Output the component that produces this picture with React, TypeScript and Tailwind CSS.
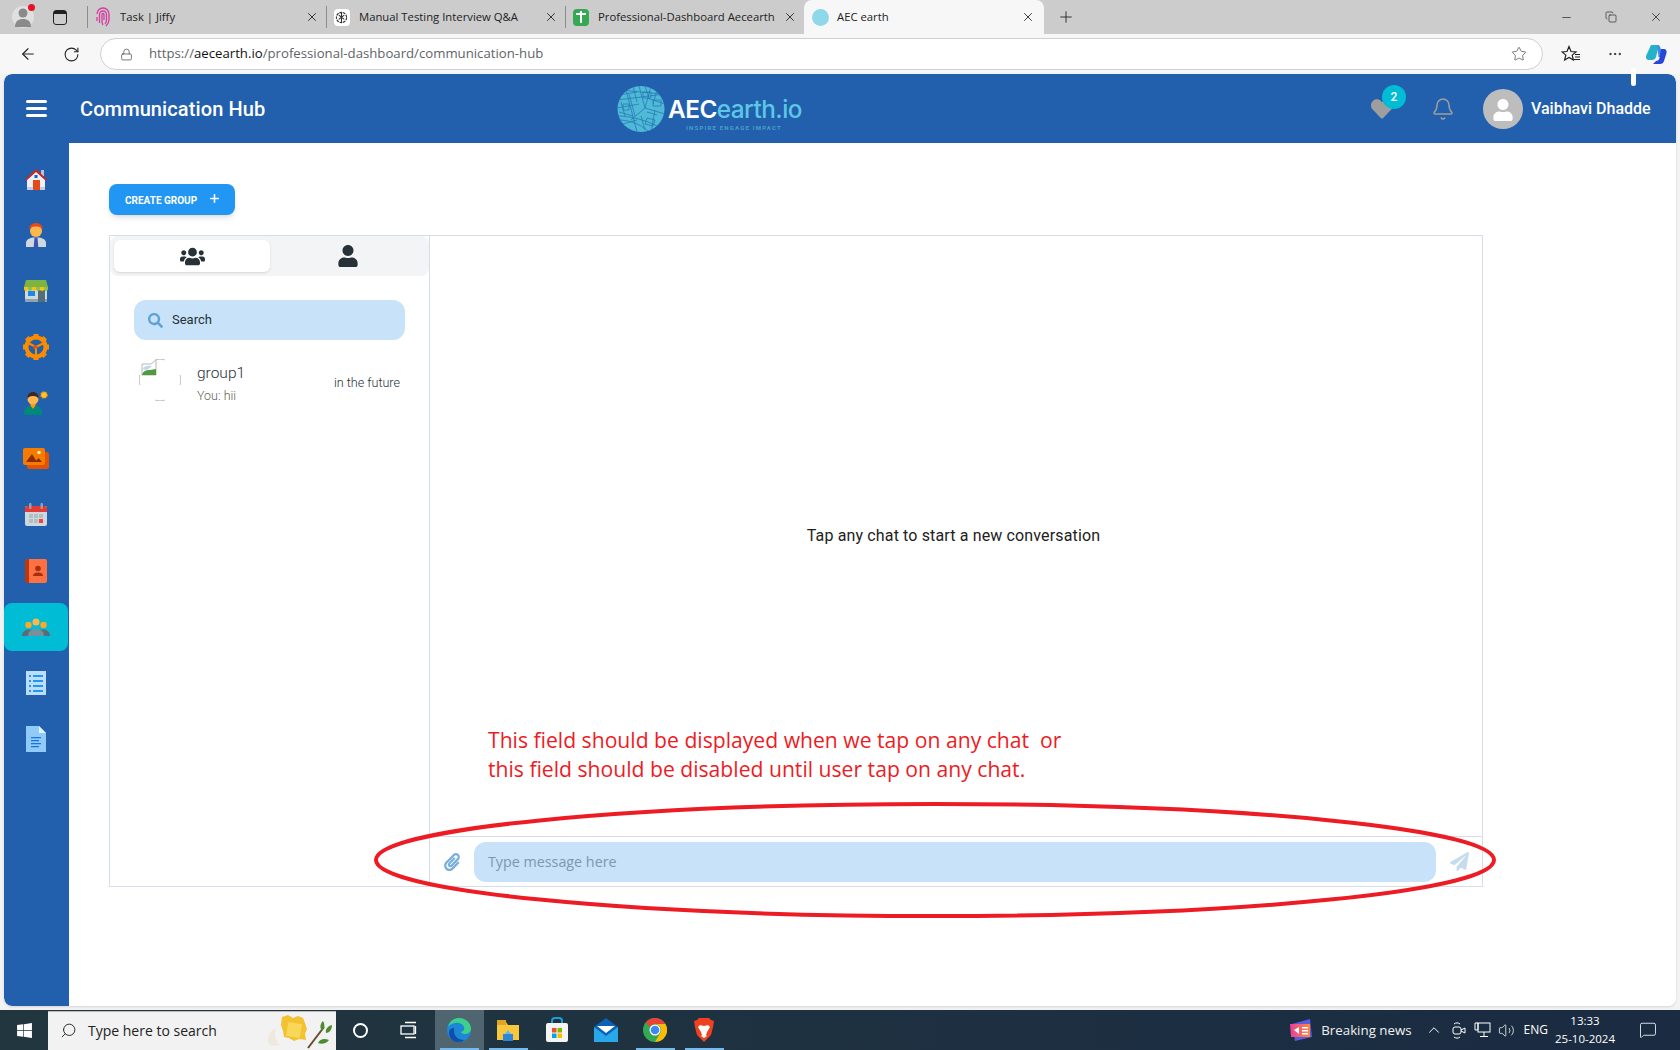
import React from 'react';
import { ArrowLeft, Bell, Copy, Minus, MoreHorizontal, Plus, RotateCw, Lock, Star, X, Search, ChevronUp, MessageSquare, Volume2 } from 'lucide-react';
import { FaHeart, FaPaperPlane, FaPaperclip, FaSearch, FaUser, FaUsers, FaWindows } from 'react-icons/fa';

const roboto = "[font-family:Roboto,sans-serif]";

/* ---------- sidebar icons ---------- */
const HomeIcon = () => (
  <svg width="24" height="24" viewBox="0 0 24 24">
    <rect x="17" y="3" width="3" height="6" fill="#b9c4dc" />
    <path d="M3 12 12 4l9 8v11H3z" fill="#eef0f7" />
    <path d="M1 12.500 12 2l11 10.500-1.300 1.300L12 5 2.300 13.800z" fill="#c62828" />
    <rect x="3" y="20" width="18" height="3" fill="#c5cae9" />
    <rect x="9" y="13" width="7" height="10" fill="#e64a19" />
    <rect x="10.500" y="8" width="3" height="3" fill="#1565c0" />
  </svg>
);
const AgentIcon = () => (
  <svg width="24" height="26" viewBox="0 0 24 26">
    <path d="M2 25v-4c0-3 3-5 7-5.500h6c4 .5 7 2.500 7 5.500v4z" fill="#cfd8dc" />
    <path d="M10.500 15.500h3l.8 9.500h-4.600z" fill="#3f51b5" />
    <circle cx="12" cy="9" r="6" fill="#ffb74d" />
    <path d="M5.500 8C5 3 8.500 1 12 1s7 2 6.500 7c-1-2-2-3.500-6.500-3.500S6.500 6 5.500 8z" fill="#e64a19" />
  </svg>
);
const ShopIcon = () => (
  <svg width="26" height="24" viewBox="0 0 26 24">
    <rect x="2" y="8" width="22" height="15" fill="#cfd8dc" />
    <rect x="2" y="20" width="22" height="3" fill="#90a4ae" />
    <rect x="5" y="12" width="7" height="5" fill="#1e88e5" />
    <rect x="15" y="11" width="7" height="12" fill="#546e7a" />
    <path d="M3 1h20l2 7H1z" fill="#7cb342" />
    <path d="M1 8h4v2a2 2 0 0 1-4 0zM9 8h4v2a2 2 0 0 1-4 0zM17 8h4v2a2 2 0 0 1-4 0z" fill="#ffc107" />
    <path d="M5 8h4v2a2 2 0 0 1-4 0zM13 8h4v2a2 2 0 0 1-4 0zM21 8h4v2a2 2 0 0 1-4 0z" fill="#8bc34a" />
  </svg>
);
const GearPlayIcon = () => (
  <svg width="26" height="26" viewBox="0 0 26 26">
    <circle cx="13" cy="13" r="9.500" fill="none" stroke="#fb8c00" strokeWidth="4" />
    <g fill="#fb8c00">
      <rect x="10.500" y="0" width="5" height="5" />
      <rect x="10.500" y="21" width="5" height="5" />
      <rect x="0" y="10.500" width="5" height="5" />
      <rect x="21" y="10.500" width="5" height="5" />
      <rect x="3" y="3" width="5" height="5" transform="rotate(45 5.500 5.500)" />
      <rect x="18" y="3" width="5" height="5" transform="rotate(45 20.500 5.500)" />
      <rect x="3" y="18" width="5" height="5" transform="rotate(45 5.500 20.500)" />
      <rect x="18" y="18" width="5" height="5" transform="rotate(45 20.500 20.500)" />
    </g>
    <path d="M13 13 5 9M13 13l8-4M13 13v8" stroke="#fb8c00" strokeWidth="2" />
    <path d="M10.500 10.500v5l5-2.500z" fill="#e65100" />
  </svg>
);
const ExpertIcon = () => (
  <svg width="26" height="26" viewBox="0 0 26 26">
    <path d="M1 25v-3c0-3.500 3-5.500 6-6l3-.5 3 .5c3 .5 6 2.500 6 6v3z" fill="#00897b" />
    <path d="M7.500 15.500 10 19l2.500-3.500v-2h-5z" fill="#ff9800" />
    <circle cx="10" cy="9" r="5.500" fill="#ffb74d" />
    <path d="M4.500 9C4 4 7 2 10 2s6 2 5.500 7c-1-2-2-3-5.500-3S5.500 7 4.500 9z" fill="#3e2723" />
    <circle cx="21" cy="5" r="3" fill="#ffca28" stroke="#ff9800" strokeWidth="1.500" strokeDasharray="1.500 1" />
  </svg>
);
const GalleryIcon = () => (
  <svg width="26" height="22" viewBox="0 0 26 22">
    <rect x="4" y="4" width="22" height="17" rx="2" fill="#e65100" />
    <rect x="0" y="0" width="22" height="17" rx="2" fill="#f57c00" />
    <path d="M3 14 9 6l5 8zM12 14l3.500-4 3.500 4z" fill="#8d2c00" />
    <circle cx="16" cy="4.500" r="1.800" fill="#ffe9a8" />
  </svg>
);
const CalendarIcon = () => (
  <svg width="24" height="24" viewBox="0 0 24 24">
    <rect x="1" y="3" width="22" height="20" rx="2" fill="#cfd8dc" />
    <path d="M1 9V5a2 2 0 0 1 2-2h18a2 2 0 0 1 2 2v4z" fill="#e53935" />
    <rect x="5" y="0" width="2.500" height="6" rx="1" fill="#90a4ae" />
    <rect x="16.500" y="0" width="2.500" height="6" rx="1" fill="#90a4ae" />
    <g fill="#b0bec5">
      <rect x="5" y="11" width="4" height="4" />
      <rect x="10" y="11" width="4" height="4" />
      <rect x="15" y="11" width="4" height="4" />
      <rect x="5" y="16" width="4" height="4" />
      <rect x="10" y="16" width="4" height="4" />
    </g>
    <rect x="15" y="16" width="4" height="4" fill="#f44336" />
  </svg>
);
const ContactsIcon = () => (
  <svg width="22" height="24" viewBox="0 0 22 24">
    <path d="M3 0h17a2 2 0 0 1 2 2v20a2 2 0 0 1-2 2H3a2 2 0 0 1-2-2V2a2 2 0 0 1 2-2z" fill="#ff7043" />
    <path d="M3 0h1v24H3a3 3 0 0 1-3-3V3a3 3 0 0 1 3-3z" fill="#bf360c" />
    <circle cx="13" cy="9.500" r="2.800" fill="#a5300a" />
    <path d="M8 17c0-2.500 2.500-3.500 5-3.500s5 1 5 3.500z" fill="#a5300a" />
  </svg>
);
const GroupIcon = () => (
  <svg width="28" height="18" viewBox="0 0 28 18">
    <path d="M0 18c0-4 3-6.500 7-6.500s7 2.500 7 6.500z" fill="#546e7a" />
    <path d="M14 18c0-4 3-6.500 7-6.500s7 2.500 7 6.500z" fill="#546e7a" />
    <path d="M6 18c0-4.500 3.500-7 8-7s8 2.500 8 7z" fill="#78909c" />
    <circle cx="6.500" cy="7" r="3.200" fill="#ffa726" />
    <circle cx="21.500" cy="7" r="3.200" fill="#ffa726" />
    <circle cx="14" cy="4" r="3.500" fill="#ffb74d" />
  </svg>
);
const ListIcon = () => (
  <svg width="20" height="24" viewBox="0 0 20 24">
    <rect width="20" height="24" fill="#bbdefb" />
    <g fill="#2196f3">
      <rect x="3" y="4" width="2" height="2" />
      <rect x="7" y="4" width="10" height="2" />
      <rect x="3" y="9" width="2" height="2" />
      <rect x="7" y="9" width="10" height="2" />
      <rect x="3" y="14" width="2" height="2" />
      <rect x="7" y="14" width="10" height="2" />
      <rect x="3" y="19" width="2" height="2" />
      <rect x="7" y="19" width="10" height="2" />
    </g>
  </svg>
);
const DocIcon = () => (
  <svg width="20" height="26" viewBox="0 0 20 26">
    <path d="M0 0h13l7 7v19H0z" fill="#90caf9" />
    <path d="M13 0l7 7h-7z" fill="#e3f2fd" />
    <path d="M5 11h10v1.200H5zM5 14h8v1.200H5zM5 17h10v1.200H5zM5 20h8v1.200H5z" fill="#1976d2" />
  </svg>
);

const sidebarItems = [
  { icon: <HomeIcon /> },
  { icon: <AgentIcon /> },
  { icon: <ShopIcon /> },
  { icon: <GearPlayIcon /> },
  { icon: <ExpertIcon /> },
  { icon: <GalleryIcon /> },
  { icon: <CalendarIcon /> },
  { icon: <ContactsIcon /> },
  { icon: <GroupIcon />, active: true },
  { icon: <ListIcon /> },
  { icon: <DocIcon /> },
];

/* ---------- browser chrome ---------- */
const tabs = [
  {
    title: 'Task | Jiffy',
    icon: (
      <svg width="16" height="20" viewBox="0 0 16 20" fill="none" stroke="#d63b9e" strokeWidth="1.300">
        <path d="M2 7a6 6 0 0 1 12 0v6c0 3-2 5-3 6" />
        <path d="M4.500 16V7.500a3.500 3.500 0 0 1 7 0V13c0 1.500-.5 3-1.500 4" />
        <path d="M8 18c-.5-1-1-2-1-3.500v-7a1 1 0 0 1 2 0V13" />
        <path d="M2 10v4" />
      </svg>
    ),
  },
  {
    title: 'Manual Testing Interview Q&A',
    icon: (
      <span className="flex h-[17px] w-[16px] items-center justify-center rounded-sm bg-white">
        <svg width="13" height="13" viewBox="0 0 14 14" fill="none" stroke="#333" strokeWidth="1.200">
          <circle cx="7" cy="7" r="5.500" strokeDasharray="3 .8" />
          <path d="M4 4.500 10 9M10 4.500 4 9M7 2v10" />
        </svg>
      </span>
    ),
  },
  {
    title: 'Professional-Dashboard Aecearth',
    icon: (
      <span className="flex h-[17px] w-[16px] items-center justify-center rounded-sm bg-[#34a853]">
        <svg width="12" height="14" viewBox="0 0 12 14" fill="#fff">
          <rect x="1" y="3" width="10" height="2" />
          <rect x="5" y="1" width="2" height="12" />
        </svg>
      </span>
    ),
  },
];

const TabStrip = () => (
  <div className="flex h-[34px] shrink-0 items-center bg-[#cccccc] [font-family:'Open_Sans',sans-serif]">
    <div className="flex w-[87px] shrink-0 items-center">
      <div className="relative ml-[12px] flex h-[22px] w-[22px] items-center justify-center rounded-full bg-[#e0e0e0]">
        <svg width="18" height="20" viewBox="0 0 18 20" fill="#8a8a8a">
          <circle cx="9" cy="6" r="4.500" />
          <path d="M1 20c0-6 3.500-8 8-8s8 2 8 8z" />
        </svg>
        <span className="absolute top-[-2px] right-[-1px] h-[7px] w-[7px] rounded-full bg-[#e81123]" />
      </div>
      <div className="ml-[19px] flex h-[15px] w-[14px] flex-col rounded-[3px] border-[1.500px] border-[#222]">
        <span className="h-[3px] bg-[#222]" />
      </div>
    </div>
    {tabs.map(tab => (
      <div key={tab.title} className="flex h-[22px] w-[239px] shrink-0 items-center border-l border-[#8c8c8c] pr-[7px] pl-[6px]">
        <span className="flex w-[17px] shrink-0 justify-center">{tab.icon}</span>
        <span className="ml-[9px] flex-1 overflow-hidden text-[11.300px] whitespace-nowrap text-[#222]">{tab.title}</span>
        <X size={14} strokeWidth={1.500} className="shrink-0 text-[#222]" />
      </div>
    ))}
    <div className="flex h-[34px] w-[240px] shrink-0 items-center rounded-t-lg bg-[#f7f7f7] pr-[9px] pl-[8px]">
      <span className="h-[17px] w-[17px] shrink-0 rounded-full bg-[#8fd8ea]" />
      <span className="ml-[8px] flex-1 text-[11.300px] text-[#222]">AEC earth</span>
      <X size={14} strokeWidth={1.500} className="shrink-0 text-[#222]" />
    </div>
    <Plus size={18} strokeWidth={1.200} className="ml-[13px] text-[#222]" />
    <div className="ml-auto flex items-center gap-[32px] pr-[17px]">
      <Minus size={13} strokeWidth={1.300} className="text-[#222]" />
      <Copy size={12} strokeWidth={1.300} className="text-[#222]" />
      <X size={14} strokeWidth={1.300} className="text-[#222]" />
    </div>
  </div>
);

const AddressBar = () => (
  <div className="flex h-[40px] shrink-0 items-center bg-[#f7f7f7] [font-family:'Open_Sans',sans-serif]">
    <ArrowLeft size={18} strokeWidth={1.500} className="ml-[19px] text-[#222]" />
    <RotateCw size={17} strokeWidth={1.500} className="ml-[26px] text-[#222]" />
    <div className="ml-[20px] flex h-[32px] w-[1443px] items-center rounded-full border border-[#d0d0d0] bg-white pr-[15px] pl-[19px]">
      <Lock size={13} strokeWidth={1.300} className="text-[#444]" />
      <span className="ml-[16px] text-[13.200px] text-[#5f6368]">
        https://<span className="text-[#111]">aecearth.io</span>/professional-dashboard/communication-hub
      </span>
      <Star size={16} strokeWidth={1.200} className="ml-auto text-[#555]" />
    </div>
    <svg width="20" height="18" viewBox="0 0 20 18" fill="none" stroke="#222" strokeWidth="1.200" className="ml-[18px]">
      <path d="M8 1.500 10 6.500l5 .4-3.800 3.200 1.200 5L8 12.500l-4.400 2.600 1.200-5L1 6.900l5-.4z" />
      <path d="M14 9.500h5M14 12h5M13 14.500h6" />
    </svg>
    <MoreHorizontal size={16} strokeWidth={1.500} className="ml-[26px] text-[#222]" />
    <svg width="24" height="24" viewBox="0 0 24 24" className="ml-[21px]">
      <path d="M7 3h8l-3 12c-.5 2-2 3-4 3H5c-2.500 0-3.500-2-3-4z" fill="#27b0c9" />
      <path d="M13 3c2 0 3 1 3.500 3l2 9h-4z" fill="#3a8ee6" />
      <path d="M17 7h3c2 0 3 2 2.500 4L20 19c-.5 2-2 3-4 3H9l3-3c2 0 3-1 3.500-3z" fill="#2747d8" />
    </svg>
  </div>
);

/* ---------- app header ---------- */
const EarthLogo = () => (
  <svg width="48" height="46" viewBox="0 0 48 46" className="shrink-0">
    <defs>
      <clipPath id="earth">
        <ellipse cx="24" cy="23" rx="23.500" ry="23" />
      </clipPath>
    </defs>
    <ellipse cx="24" cy="23" rx="23.500" ry="23" fill="#4fb9d8" />
    <g clipPath="url(#earth)" stroke="#2a78b4" strokeWidth="0.800" fill="none">
      <path d="M0 30c14 0 30 4 48 14M0 34c12 0 22 3 32 12M8 0l12 46M22 0l6 22 20 6M34 0 28 22 14 34M0 14l48-6M0 22l22-4M30 12l18 6M12 8l6 22M38 24l-4 22M2 26l14 4" />
      <path d="M4 4l40 4M2 9l18-3M16 0l4 16M28 0l4 12M40 4l-4 14M4 16l4 14M24 30l4 14M30 26l10 3M6 38l14-4M26 6h8v6h-8zM36 14h8v6h-8zM6 18h6v6H6zM30 32l8 2-2 6-8-2z" />
    </g>
  </svg>
);

const AppHeader = () => (
  <header className={`flex h-[69px] shrink-0 items-center rounded-t-lg bg-[#2260ae] ${roboto}`}>
    <div className="ml-[22px] flex w-[21px] flex-col gap-[4px]">
      <span className="h-[3px] rounded-full bg-white" />
      <span className="h-[3px] rounded-full bg-white" />
      <span className="h-[3px] rounded-full bg-white" />
    </div>
    <h1 className="ml-[33px] w-[343px] text-[20px] font-medium tracking-[0.1px] text-white">Communication Hub</h1>
    <div className="ml-[194px] flex w-[190px] items-center gap-[3px]">
      <EarthLogo />
      <div className="flex flex-col items-center pt-[10px]">
        <span className="text-[24.300px] leading-[28px] font-semibold tracking-[-0.5px] whitespace-nowrap text-white [font-family:Inter,sans-serif]">
          AEC<span className="font-medium text-[#5cc8e4]">earth.io</span>
        </span>
        <span className="-ml-[2px] text-[6px] leading-[9px] font-bold tracking-[1.200px] whitespace-nowrap text-[#4a9fc9]">INSPIRE ENGAGE IMPACT</span>
      </div>
    </div>
    <div className="relative ml-[563px] flex h-[24px] w-[24px] items-center justify-center">
      <FaHeart size={22} className="text-[#9e9e9e]" />
      <span className="absolute top-[-12px] left-[12px] flex h-[24px] w-[24px] items-center justify-center rounded-full bg-[#00bcd4] text-[12px] font-medium text-white">2</span>
    </div>
    <Bell size={24} strokeWidth={1.500} className="ml-[37px] text-[#9e9e9e]" />
    <div className="ml-[28px] flex h-[40px] w-[40px] items-end justify-center overflow-hidden rounded-full bg-[#bdbdbd]">
      <FaUser size={22} className="mb-[8px] text-white" />
    </div>
    <span className="ml-[8px] text-[16px] font-medium whitespace-nowrap text-white">Vaibhavi Dhadde</span>
  </header>
);

const Sidebar = () => (
  <aside className="flex w-[65px] shrink-0 flex-col rounded-bl-lg bg-[#2260ae] pt-[8px]">
    {sidebarItems.map((item, i) => (
      <div key={i} className="flex h-[56px] items-center">
        <div className={`flex h-[48px] w-[64px] items-center justify-center rounded-lg ${item.active ? 'bg-[#00bcd4]' : ''}`}>{item.icon}</div>
      </div>
    ))}
  </aside>
);

/* ---------- chat ---------- */
const BrokenAvatar = () => (
  <svg width="42" height="42" viewBox="0 0 42 42" fill="none" className="shrink-0">
    <path d="M16 .8a21 21 0 0 1 10 0M41.200 16a21 21 0 0 1 0 10M26 41.200a21 21 0 0 1-10 0M.8 26a21 21 0 0 1 0-10" stroke="#c4c4c4" />
    <path d="M3 5h9l5-4v15H3z" fill="#fff" stroke="#b8b8b8" />
    <path d="M3 16c1-4 4-5 8-5l6-1v6z" fill="#4d9a3f" />
    <path d="M3 10c2-3 6-4 10-3l-5 4z" fill="#c3d6e8" />
  </svg>
);

const ChatList = () => (
  <div className="flex w-[320px] shrink-0 flex-col border-r border-[#d5dee8]">
    <div className="flex h-[40px] rounded-lg bg-[#f3f4f6] px-[4px] pt-[4px] pb-[4px]">
      <div className="flex h-[32px] w-[156px] items-center justify-center rounded-md bg-white shadow-sm">
        <FaUsers size={25} className="text-[#263238]" />
      </div>
      <div className="flex flex-1 items-center justify-center">
        <FaUser size={22} className="text-[#263238]" />
      </div>
    </div>
    <div className="mx-[24px] mt-[24px] flex h-[40px] w-[271px] items-center rounded-xl bg-[#c7e2f9] px-[14px]">
      <FaSearch size={15} className="text-[#5fa3d6]" />
      <span className="ml-[9px] text-[13px] text-[#263238]">Search</span>
    </div>
    <div className="mt-[19px] flex pr-[29px] pl-[29px]">
      <BrokenAvatar />
      <div className="ml-[16px] flex-1 pt-[5px]">
        <div className="text-[15.500px] leading-[19px] font-light text-[#263238]">group1</div>
        <div className="mt-[6px] text-[12.500px] leading-[14px] font-light text-[#5f5f52]">You: hii</div>
      </div>
      <span className="mt-[17px] text-[12.600px] leading-[14px] font-light whitespace-nowrap text-[#263238]">in the future</span>
    </div>
  </div>
);

const ChatPanel = () => (
  <div className="flex flex-1 flex-col">
    <div className="flex flex-1 items-center justify-center pr-[5px]">
      <p className="text-[16px] tracking-[0.14px] text-[#212121]">Tap any chat to start a new conversation</p>
    </div>
    <div className="flex h-[50px] items-center border-t border-[#d5dee8]">
      <FaPaperclip size={18} className="ml-[13px] text-[#79aedd]" />
      <div className="ml-[13px] flex h-[40px] w-[962px] items-center rounded-xl bg-[#c7e2f9] px-[14px]">
        <span className="pt-[1px] [font-family:'Open_Sans',sans-serif] text-[14.300px] text-[#7d98ae]">Type message here</span>
      </div>
      <FaPaperPlane size={19} className="ml-[14px] text-[#c5dcef]" />
    </div>
  </div>
);

const Content = () => (
  <main className={`flex-1 bg-white pt-[41px] pl-[40px] ${roboto}`}>
    <button className="flex h-[31px] w-[126px] items-center rounded-lg bg-[#2196f3] pt-[1px] pl-[16px] text-[10px] font-bold text-white shadow-md">
      CREATE GROUP
      <Plus size={13} strokeWidth={3} className="mb-[4px] ml-[11px]" />
    </button>
    <div className="mt-[20px] flex h-[652px] w-[1374px] border border-[#d5dee8]">
      <ChatList />
      <ChatPanel />
    </div>
  </main>
);

/* ---------- windows taskbar ---------- */
const EdgeIcon = () => (
  <svg width="26" height="26" viewBox="0 0 26 26">
    <circle cx="13" cy="13" r="12" fill="#1b87d6" />
    <path d="M2 10C4 3 9 1 13 1c7 0 12 5 12 11 0 3-3 5-6 5-2 0-4-1-4-2 3-1 4-3 3-5-1-3-5-5-9-4S3 8 2 10z" fill="#3ed08b" />
    <path d="M8 14c0 5 4 9 10 9-2 2-4 2-6 2-6 0-9-5-9-9 0-3 2-5 5-5z" fill="#0f4fa8" />
  </svg>
);
const FolderIcon = () => (
  <svg width="24" height="22" viewBox="0 0 24 22">
    <path d="M1 3h9l2 3h11v15H1z" fill="#f9c73e" />
    <path d="M1 1h9v5H1z" fill="#e0a526" />
    <rect x="7" y="15" width="10" height="7" fill="#2d87d8" />
    <path d="M9 15l3-4 3 4z" fill="#64b5f6" />
  </svg>
);
const StoreIcon = () => (
  <svg width="24" height="26" viewBox="0 0 24 26">
    <path d="M7 7V4a3 3 0 0 1 3-3h4a3 3 0 0 1 3 3v3" fill="none" stroke="#19a0d8" strokeWidth="2" />
    <rect x="1" y="6" width="22" height="19" rx="2" fill="#f4f4f4" />
    <rect x="7" y="11" width="4.500" height="4.500" fill="#f25022" />
    <rect x="12.500" y="11" width="4.500" height="4.500" fill="#7fba00" />
    <rect x="7" y="16.500" width="4.500" height="4.500" fill="#00a4ef" />
    <rect x="12.500" y="16.500" width="4.500" height="4.500" fill="#ffb900" />
  </svg>
);
const MailIcon = () => (
  <svg width="24" height="24" viewBox="0 0 24 24">
    <path d="M0 9 12 0l12 9v15H0z" fill="#0a62b5" />
    <path d="M0 9l12 9 12-9v15H0z" fill="#28a8ea" />
    <path d="M3 8h18l-9 7z" fill="#fff" />
  </svg>
);
const ChromeIcon = () => (
  <svg width="24" height="24" viewBox="0 0 24 24">
    <circle cx="12" cy="12" r="12" fill="#34a853" />
    <path d="M12 0a12 12 0 0 1 10.400 6H12a6 6 0 0 0-5.200 3L2.800 4.300A12 12 0 0 1 12 0z" fill="#ea4335" />
    <path d="M22.400 6A12 12 0 0 1 12 24l5.200-9A6 6 0 0 0 12 6z" fill="#fbbc05" />
    <circle cx="12" cy="12" r="5.500" fill="#fff" />
    <circle cx="12" cy="12" r="4.300" fill="#4285f4" />
  </svg>
);
const BraveIcon = () => (
  <svg width="20" height="24" viewBox="0 0 20 24">
    <path d="M5 0h10l2 2 3 1-1 6-2 8-7 7-7-7-2-8-1-6 3-1z" fill="#f1421f" />
    <path d="M6 7l4 1 4-1 2 2-3 5-1 3 1 1-3 2-3-2 1-1-1-3-3-5z" fill="#fff" />
  </svg>
);

const taskbarApps = [
  { icon: <EdgeIcon />, active: true, running: true },
  { icon: <FolderIcon />, running: true },
  { icon: <StoreIcon /> },
  { icon: <MailIcon /> },
  { icon: <ChromeIcon />, running: true },
  { icon: <BraveIcon />, running: true },
];

const Taskbar = () => (
  <footer className="flex h-[40px] shrink-0 items-center bg-gradient-to-r from-[#22363f] to-[#1a2b42] [font-family:'Open_Sans',sans-serif] text-white">
    <div className="flex w-[48px] justify-center">
      <FaWindows size={17} />
    </div>
    <div className="mt-[1px] flex h-[39px] w-[288px] items-center border-t border-[#bbb] bg-[#f2f2f2] pb-[1px] pl-[12px] text-[#222]">
      <Search size={17} strokeWidth={1.300} className="-scale-x-100" />
      <span className="ml-[11px] text-[14px]">Type here to search</span>
      <svg width="70" height="36" viewBox="0 0 70 36" className="ml-auto">
        <path d="M2 28c0-8 3-10 8-13-2 5-1 13 4 17-6 2-12 0-12-4z" fill="#efe8dc" />
        <g transform="translate(-8 0)">
          <path d="M24 4l6-2 5 3 5-2 5 2 2 5 2 6-2 5 1 6-7-1-5 2-5-3-5-1-1-6-2-6z" fill="#f2c230" />
          <rect x="29" y="10" width="14" height="14" fill="#f9d75a" transform="rotate(10 36 17)" />
        </g>
        <path d="M42 35 58 14" stroke="#6b4a2b" strokeWidth="2" />
        <path d="M56 18c-3-4-1-8 1-10 2 3 2 7-1 10zM52 30c4 2 9 0 11-3-5-2-9-1-11 3zM60 20c3 0 6-3 6-8-4 1-7 4-6 8z" fill="#4c8b2f" />
      </svg>
    </div>
    <div className="flex w-[48px] justify-center">
      <span className="h-[15px] w-[15px] rounded-full border-[2.500px] border-white" />
    </div>
    <div className="flex w-[48px] items-center justify-center">
      <svg width="18" height="18" viewBox="0 0 18 18" fill="none" stroke="#fff" strokeWidth="1.300">
        <rect x="2" y="5" width="13" height="8" />
        <path d="M6 1.500h11M6 16.500h11M16.500 5v8" />
      </svg>
    </div>
    <div className="ml-[3px] flex">
      {taskbarApps.map((app, i) => (
        <div key={i} className={`relative flex h-[40px] w-[49px] items-center justify-center pr-[2px] ${app.active ? 'bg-[#4f6570]' : ''}`}>
          {app.icon}
          {app.running && <span className="absolute right-[5px] bottom-0 left-[5px] h-[2px] bg-[#76b9ed]" />}
        </div>
      ))}
    </div>
    <div className="ml-auto flex items-center pr-[23px]">
      <svg width="24" height="24" viewBox="0 0 24 24">
        <path d="M3 6 21 1l2 18-17 4z" fill="#5b5be0" />
        <path d="M1 6h20v13H2z" fill="url(#news)" />
        <defs>
          <linearGradient id="news" x1="0" x2="1">
            <stop offset="0" stopColor="#e83f9b" />
            <stop offset="1" stopColor="#ff8a3c" />
          </linearGradient>
        </defs>
        <path d="M5 12l5-3v7zM13 9h6v1.500h-6zM13 12h6v1.500h-6zM13 15h6v1.500h-6z" fill="#fff" />
      </svg>
      <span className="ml-[8px] pt-[1px] text-[13.300px] text-[#f0f0f0]">Breaking news</span>
      <ChevronUp size={18} strokeWidth={1.300} className="ml-[13px]" />
      <svg width="14" height="18" viewBox="0 0 14 18" fill="none" stroke="#fff" strokeWidth="1" className="ml-[9px]">
        <rect x="1" y="6" width="8" height="7" rx="2" />
        <path d="M9 9l4-2v5l-4-2M2 3c2-1.500 4-1.500 6 0M2 16c2 1.500 4 1.500 6 0" />
      </svg>
      <svg width="17" height="16" viewBox="0 0 17 16" fill="none" stroke="#fff" strokeWidth="1" className="ml-[8px]">
        <rect x="4" y="1" width="12" height="9" />
        <path d="M1 1h3v7H1zM10 10v4M6 14.500h8" />
      </svg>
      <Volume2 size={17} strokeWidth={1.100} className="ml-[7px]" />
      <span className="ml-[9px] text-[12px]">ENG</span>
      <div className="ml-[7px] flex w-[60px] flex-col items-center text-[11.500px] leading-[18px]">
        <span>13:33</span>
        <span className="whitespace-nowrap">25-10-2024</span>
      </div>
      <MessageSquare size={18} strokeWidth={1.100} className="ml-[24px]" />
    </div>
  </footer>
);

const App: React.FC = () => (
  <div className="relative flex h-[1050px] w-[1680px] flex-col overflow-hidden bg-[#f3f3f3]">
    <TabStrip />
    <AddressBar />
    <div className="mx-[4px] mb-[4px] flex flex-1 flex-col overflow-hidden rounded-lg shadow-sm">
      <AppHeader />
      <div className="flex flex-1">
        <Sidebar />
        <Content />
      </div>
    </div>
    <Taskbar />

    {/* tester's markup on top of the screenshot */}
    <div className="absolute top-[68px] left-[1631px] h-[18px] w-[5px] rounded-full bg-white" />
    <div className="absolute top-[725px] left-[488px] text-[21.150px] leading-[29px] whitespace-nowrap text-[#ed1c24] [font-family:'Open_Sans',sans-serif]">
      <p>This field should be displayed when we tap on any chat&nbsp; or</p>
      <p>this field should be disabled until user tap on any chat.</p>
    </div>
    <svg width="1680" height="1050" className="pointer-events-none absolute inset-0">
      <ellipse cx="935" cy="860" rx="559" ry="56" fill="none" stroke="#ed1c24" strokeWidth="4" />
    </svg>
  </div>
);

export default App;
